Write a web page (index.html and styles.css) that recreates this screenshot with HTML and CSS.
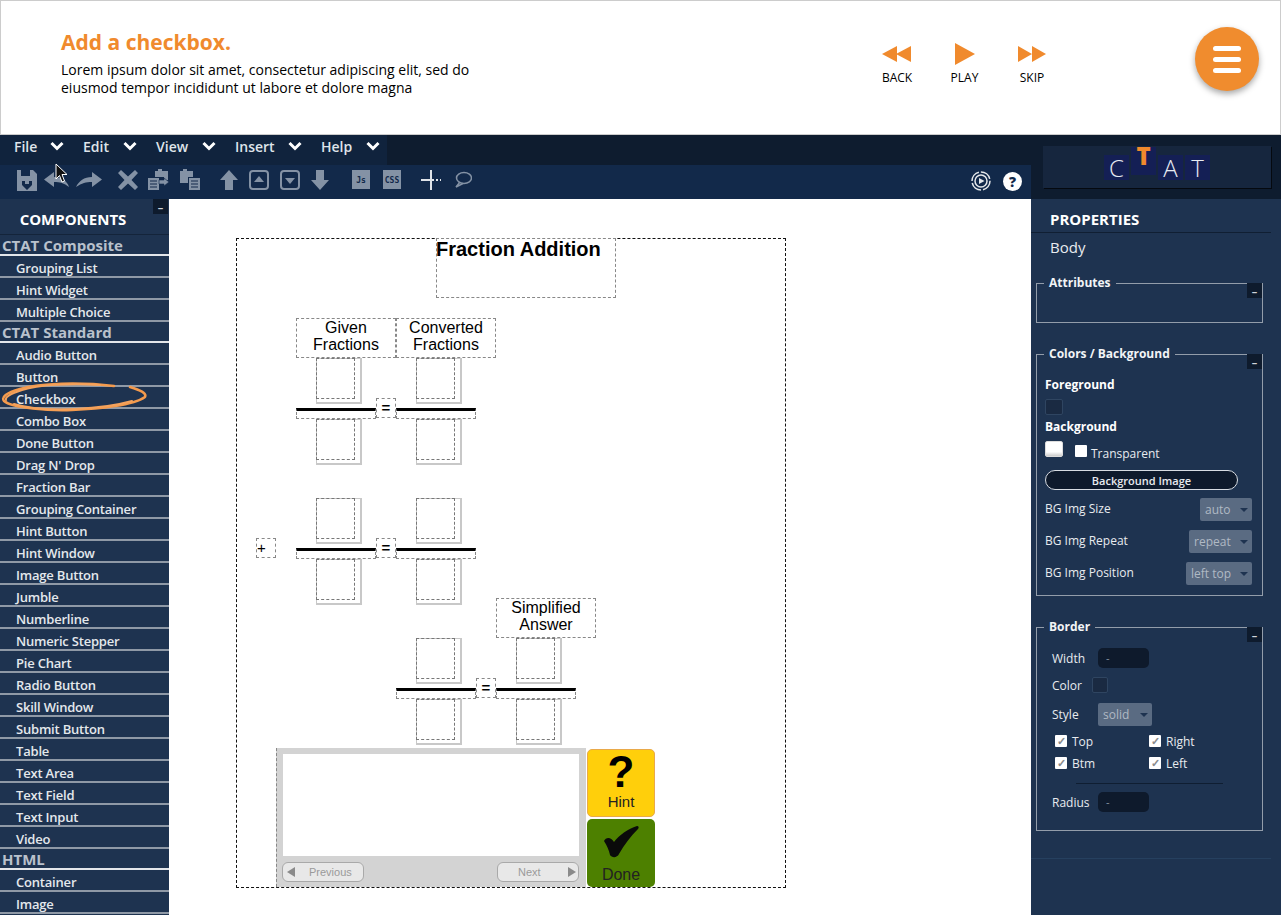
FILE: index.html
```html
<!DOCTYPE html>
<html lang="en">
<head>
    <meta charset="UTF-8">
    <meta name="viewport" content="width=device-width, initial-scale=1.0">
    <title>Add a checkbox</title>
    <link rel="stylesheet" href="styles.css">
</head>
<body>
    <header class="lesson">
        <div class="intro">
            <h1>Add a checkbox.</h1>
            <p>Lorem ipsum dolor sit amet, consectetur adipiscing elit, sed do<br>eiusmod tempor incididunt ut labore et dolore magna</p>
        </div>
        <div class="media">
            <div class="media-btn">
                <svg width="30" height="22" viewBox="0 0 30 22"><path d="M0 11 15 3V19ZM14 11 29 3V19Z" fill="#f08a2d"/></svg>
                <span>BACK</span>
            </div>
            <div class="media-btn">
                <svg width="30" height="22" viewBox="0 0 30 22"><path d="M5 0 25 11 5 22Z" fill="#f08a2d"/></svg>
                <span>PLAY</span>
            </div>
            <div class="media-btn">
                <svg width="30" height="22" viewBox="0 0 30 22"><path d="M1 3 15 11 1 19ZM15 3 29 11 15 19Z" fill="#f08a2d"/></svg>
                <span>SKIP</span>
            </div>
        </div>
        <button class="burger" type="button" aria-label="Menu"><i></i><i></i><i></i></button>
    </header>

    <div class="topbar">
        <div class="bars">
            <nav class="menu">
                <a class="m-file">File <svg class="chev" viewBox="0 0 14 10"><path d="M1.5 2 7 7.500 12.500 2" /></svg></a>
                <a class="m-edit">Edit <svg class="chev" viewBox="0 0 14 10"><path d="M1.5 2 7 7.500 12.500 2" /></svg></a>
                <a class="m-view">View <svg class="chev" viewBox="0 0 14 10"><path d="M1.5 2 7 7.500 12.500 2" /></svg></a>
                <a class="m-insert">Insert <svg class="chev" viewBox="0 0 14 10"><path d="M1.5 2 7 7.500 12.500 2" /></svg></a>
                <a class="m-help">Help <svg class="chev" viewBox="0 0 14 10"><path d="M1.5 2 7 7.500 12.500 2" /></svg></a>
            </nav>
            <div class="tools">
                <div class="tool-group g1">
                    <svg width="20" height="22" viewBox="0 0 20 22"><path d="M0 1H16L20 5V22H0ZM4 1V7H13V1ZM5 12H8V15H12V12H15V16L10 21 5 16Z" fill="#8492a5" fill-rule="evenodd"/></svg>
                    <svg width="25" height="16" viewBox="0 0 25 16"><path d="M10 0V5C18 5 23 9 25 15 20 11 16 10 10 10V15L0 7.500Z" fill="#8492a5"/></svg>
                    <svg width="26" height="16" viewBox="0 0 26 16"><path d="M16 0V5C8 5 3 9 0 15 6 11 10 10 16 10V15L26 7.500Z" fill="#8492a5"/></svg>
                </div>
                <div class="tool-group g2">
                    <svg width="20" height="20" viewBox="0 0 20 20"><path d="M3 0 10 6.500 17 0 20 3 13.500 10 20 17 17 20 10 13.500 3 20 0 17 6.500 10 0 3Z" fill="#8492a5"/></svg>
                    <svg width="21" height="21" viewBox="0 0 21 21"><path d="M7 2H10V0H14V2H20V11H16V8H7ZM0 9H11V21H0Z" fill="#8492a5"/><path d="M2 12H9M2 15H9M2 18H9" stroke="#12294a"/><path d="M11 11H16V9L21 13 16 17V15H11Z" fill="#8492a5" stroke="#12294a" stroke-width=".6"/></svg>
                    <svg width="21" height="21" viewBox="0 0 21 21"><path d="M1 2H4V0H8V2H14V8H9V14H1ZM10 9H21V21H10Z" fill="#8492a5"/><path d="M12 12H19M12 15H19M12 18H19" stroke="#12294a"/></svg>
                </div>
                <div class="tool-group g3">
                    <svg width="18" height="20" viewBox="0 0 18 20"><path d="M9 0 18 10H13V20H5V10H0Z" fill="#8492a5"/></svg>
                    <svg width="20" height="20" viewBox="0 0 20 20"><rect x="1" y="1" width="18" height="18" rx="3" fill="none" stroke="#8492a5" stroke-width="2"/><path d="M10 6 15 12H5Z" fill="#8492a5"/></svg>
                    <svg width="20" height="20" viewBox="0 0 20 20"><rect x="1" y="1" width="18" height="18" rx="3" fill="none" stroke="#8492a5" stroke-width="2"/><path d="M10 14 15 8H5Z" fill="#8492a5"/></svg>
                    <svg width="18" height="20" viewBox="0 0 18 20"><path d="M9 20 18 10H13V0H5V10H0Z" fill="#8492a5"/></svg>
                </div>
                <div class="tool-group g4">
                    <span class="code-tile">Js</span>
                    <span class="code-tile">CSS</span>
                </div>
                <div class="tool-group g5">
                    <svg width="20" height="20" viewBox="0 0 20 20"><path d="M10 0V20M0 10H20" stroke="#dfe3e8" stroke-width="2"/><path d="M13 10H20" stroke="#12294a" stroke-width="2" stroke-dasharray="2 2"/></svg>
                    <svg width="18" height="18" viewBox="0 0 18 18"><ellipse cx="10" cy="7" rx="7.500" ry="5.500" fill="none" stroke="#8492a5" stroke-width="1.500"/><path d="M6 11 2 16 9 12.500" fill="none" stroke="#8492a5" stroke-width="1.500"/></svg>
                </div>
                <div class="tool-end">
                    <svg width="20" height="20" viewBox="0 0 20 20"><circle cx="10" cy="10" r="9" fill="none" stroke="#e4e7ea" stroke-width="1.500" stroke-dasharray="12 2"/><circle cx="10" cy="10" r="6" fill="none" stroke="#e4e7ea" stroke-width="1.500"/><path d="M8 7 13.500 10 8 13Z" fill="#e4e7ea"/></svg>
                    <span class="help-dot">?</span>
                </div>
            </div>
        </div>
        <div class="logo">
            <span class="logo-cell">C</span>
            <span class="logo-cell logo-t">T</span>
            <span class="logo-cell">A</span>
            <span class="logo-cell">T</span>
        </div>
    </div>

    <main class="workspace">
        <aside class="components">
            <h2>COMPONENTS</h2>
            <span class="collapse">&ndash;</span>
            <h3>CTAT Composite</h3>
            <ul>
                <li>Grouping List</li>
                <li>Hint Widget</li>
                <li>Multiple Choice</li>
            </ul>
            <h3>CTAT Standard</h3>
            <ul>
                <li>Audio Button</li>
                <li>Button</li>
                <li>Checkbox</li>
                <li>Combo Box</li>
                <li>Done Button</li>
                <li>Drag N' Drop</li>
                <li>Fraction Bar</li>
                <li>Grouping Container</li>
                <li>Hint Button</li>
                <li>Hint Window</li>
                <li>Image Button</li>
                <li>Jumble</li>
                <li>Numberline</li>
                <li>Numeric Stepper</li>
                <li>Pie Chart</li>
                <li>Radio Button</li>
                <li>Skill Window</li>
                <li>Submit Button</li>
                <li>Table</li>
                <li>Text Area</li>
                <li>Text Field</li>
                <li>Text Input</li>
                <li>Video</li>
            </ul>
            <h3>HTML</h3>
            <ul>
                <li>Container</li>
                <li>Image</li>
            </ul>
            <svg class="scribble" width="150" height="34" viewBox="0 0 150 34">
                <path d="M114 5C80 1 40 2 20 8 6 12 1 16 4 20 12 27 50 30 72 29 100 28 134 24 145 16 147 12 140 9 130 6" fill="none" stroke="#f39a4d" stroke-width="2.500" stroke-linecap="round"/>
                <path d="M100 4C70 2 38 4 22 9 10 13 5 16 6 19M14 23C30 28 55 29 75 28 95 27 118 24 132 20" fill="none" stroke="#f4a25c" stroke-width="2" stroke-linecap="round"/>
            </svg>
        </aside>

        <section class="canvas">
            <div class="stage">
                <div class="cell title-cell">Fraction Addition</div>

                <div class="cell label-cell at-given">Given<br>Fractions</div>
                <div class="cell label-cell at-converted">Converted<br>Fractions</div>
                <div class="frac-row row-first">
                    <div class="fraction"><div class="frac-box"></div><div class="frac-bar"></div><div class="frac-box"></div></div>
                    <div class="cell eq">=</div>
                    <div class="fraction"><div class="frac-box"></div><div class="frac-bar"></div><div class="frac-box"></div></div>
                </div>

                <div class="cell eq plus">+</div>
                <div class="frac-row row-second">
                    <div class="fraction"><div class="frac-box"></div><div class="frac-bar"></div><div class="frac-box"></div></div>
                    <div class="cell eq">=</div>
                    <div class="fraction"><div class="frac-box"></div><div class="frac-bar"></div><div class="frac-box"></div></div>
                </div>

                <div class="cell label-cell at-simplified">Simplified<br>Answer</div>
                <div class="frac-row row-third">
                    <div class="fraction"><div class="frac-box"></div><div class="frac-bar"></div><div class="frac-box"></div></div>
                    <div class="cell eq">=</div>
                    <div class="fraction"><div class="frac-box"></div><div class="frac-bar"></div><div class="frac-box"></div></div>
                </div>

                <div class="tutor">
                    <div class="hints">
                        <div class="hint-text"></div>
                        <div class="hint-nav">
                            <button type="button" class="prev"><i class="tri-left"></i>Previous</button>
                            <button type="button" class="next">Next<i class="tri-right"></i></button>
                        </div>
                    </div>
                    <div class="tutor-btns">
                        <div class="big-btn hint-btn"><b>?</b><span>Hint</span></div>
                        <div class="big-btn done-btn">
                            <svg width="35" height="32" viewBox="0 0 35 32"><path d="M0 15C2 11 7 11 10 16 15 9 24 3 33 0 35 0 35 2 34 3 27 10 20 19 15 28 13 32 8 32 6 29 5 24 3 20 0 15Z" fill="#0a0a0a"/></svg>
                            <span>Done</span>
                        </div>
                    </div>
                </div>
            </div>
        </section>

        <aside class="properties">
            <h2>PROPERTIES</h2>
            <div class="target">Body</div>

            <fieldset class="attrs">
                <legend>Attributes</legend>
                <span class="collapse">&ndash;</span>
            </fieldset>

            <fieldset class="colors">
                <legend>Colors / Background</legend>
                <span class="collapse">&ndash;</span>
                <div class="strong-label">Foreground</div>
                <div class="swatch"></div>
                <div class="strong-label bg-label">Background</div>
                <div class="bg-row">
                    <div class="swatch swatch-white"></div>
                    <span class="box"></span>
                    <span>Transparent</span>
                </div>
                <button class="pill" type="button">Background Image</button>
                <div class="prop-row"><span>BG Img Size</span><span class="select sel-size">auto</span></div>
                <div class="prop-row"><span>BG Img Repeat</span><span class="select sel-repeat">repeat</span></div>
                <div class="prop-row"><span>BG Img Position</span><span class="select sel-position">left top</span></div>
            </fieldset>

            <fieldset class="border-set">
                <legend>Border</legend>
                <span class="collapse">&ndash;</span>
                <div class="border-row"><label>Width</label><span class="num">-</span></div>
                <div class="border-row color-row"><label>Color</label><div class="swatch swatch-sm"></div></div>
                <div class="border-row style-row"><label>Style</label><span class="select sel-style">solid</span></div>
                <div class="sides">
                    <span><i class="box check">&#10003;</i>Top</span>
                    <span><i class="box check">&#10003;</i>Right</span>
                    <span><i class="box check">&#10003;</i>Btm</span>
                    <span><i class="box check">&#10003;</i>Left</span>
                </div>
                <hr>
                <div class="border-row"><label>Radius</label><span class="num">-</span></div>
            </fieldset>
            <div class="panel-rule"></div>
        </aside>
    </main>

    <svg class="pointer" width="14" height="21" viewBox="0 0 14 21"><path d="M1 1V16L4.500 12.500 7 19 9.500 18 7 11.500H12Z" fill="#111" stroke="#fff"/></svg>
</body>
</html>
```

FILE: styles.css
```css
* {
    margin: 0;
    padding: 0;
    box-sizing: border-box;
}

body {
    width: 1281px;
    height: 915px;
    overflow: hidden;
    position: relative;
    background: #fff;
    font-family: 'Open Sans', sans-serif;
    color: #000;
}

/* lesson header */
.lesson {
    height: 135px;
    display: flex;
    align-items: flex-start;
    border: 1px solid #ccc;
    padding-left: 60px;
}

.intro {
    width: 803px;
    padding-top: 27px;
}

.intro h1 {
    font-size: 21px;
    line-height: 28px;
    font-weight: 700;
    color: #f08a2d;
    margin-bottom: 5px;
}

.intro p {
    font-size: 14px;
    line-height: 18px;
}

.media {
    display: flex;
    gap: 1.5px;
    padding-top: 42px;
}

.media-btn {
    width: 66px;
    display: flex;
    flex-direction: column;
    align-items: center;
    gap: 4px;
    font-size: 12px;
    font-weight: 500;
    line-height: 18px;
}

.burger {
    width: 64px;
    height: 64px;
    margin: 26px 0 0 130px;
    border: none;
    border-radius: 50%;
    background: #f08c2e;
    box-shadow: 0 3px 6px rgba(0, 0, 0, 0.35);
    display: flex;
    flex-direction: column;
    align-items: center;
    justify-content: center;
    gap: 6px;
}

.burger i {
    width: 28px;
    height: 5px;
    border-radius: 3px;
    background: #fff;
}

/* menu + toolbar */
.topbar {
    height: 64px;
    display: flex;
    background: #0e1c2f;
}

.bars {
    width: 1031px;
}

.menu {
    width: 387px;
    height: 30px;
    display: flex;
    padding-left: 14px;
    background: #10233d;
}

.menu a {
    display: flex;
    justify-content: space-between;
    padding-right: 19px;
    align-items: center;
    font-size: 14px;
    font-weight: 600;
    color: #dfe4ea;
    height: 26px;
    margin-top: -2px;
}

.m-file { width: 69px; }
.m-edit { width: 73px; }
.m-view { width: 79px; }
.m-insert { width: 86px; }
.menu .m-help { width: 66px; padding-right: 7px; }

.chev {
    width: 14px;
    height: 10px;
    margin-top: -1px;
    fill: none;
    stroke: #fff;
    stroke-width: 3;
}

.tools {
    height: 34px;
    display: flex;
    align-items: center;
    padding: 0 0 5px 17px;
    background: #12294a;
}

.tool-group {
    display: flex;
    align-items: center;
}

.g1 { gap: 7px; }
.g2 { gap: 10px; margin-left: 16px; }
.g3 { gap: 11px; margin-left: 20px; }
.g4 { gap: 13px; margin-left: 23px; }
.g5 { gap: 13px; margin-left: 20px; }

.code-tile {
    width: 18px;
    height: 19px;
    background: #8492a5;
    color: #12294a;
    font-family: 'DejaVu Sans Mono', monospace;
    font-size: 8px;
    font-weight: 700;
    line-height: 21px;
    text-align: center;
}

.tool-end {
    margin-left: auto;
    margin-right: 9px;
    display: flex;
    align-items: center;
    gap: 12px;
    padding-top: 3px;
}

.help-dot {
    width: 19px;
    height: 19px;
    border-radius: 50%;
    background: #fff;
    color: #12294a;
    font-size: 14px;
    font-weight: 800;
    line-height: 19px;
    text-align: center;
}

.logo {
    width: 228px;
    height: 42px;
    margin: 11px 0 0 12px;
    display: flex;
    justify-content: center;
    align-items: flex-end;
    gap: 2px;
    padding-bottom: 8px;
    background: #16263e;
    box-shadow: 1px 1px 0 #05090f;
}

.logo-cell {
    width: 25px;
    height: 25px;
    background: #141f55;
    color: #e8ebf2;
    font-size: 24px;
    font-weight: 300;
    line-height: 26px;
    text-align: center;
}

.logo-t {
    height: 28px;
    margin-bottom: 5px;
    color: #f08a2d;
    font-weight: 800;
    line-height: 17px;
}

/* three panes */
.workspace {
    height: 716px;
    display: flex;
}

.components {
    width: 169px;
    position: relative;
    background: #1e3350;
    color: #e4e8ec;
}

.components h2 {
    height: 36px;
    padding: 10px 23px 0 0;
    font-size: 15px;
    line-height: 20px;
    font-weight: 700;
    color: #fff;
    text-align: center;
    border-bottom: 1px solid #14243a;
}

.components h3 {
    height: 21px;
    padding-left: 2px;
    font-size: 15px;
    line-height: 20px;
    font-weight: 700;
    color: #b9c1cc;
    border-bottom: 2px solid #e3e6ea;
}

.components ul {
    list-style: none;
}

.components li {
    height: 22px;
    padding: 2px 0 0 16px;
    font-size: 13px;
    font-weight: 600;
    letter-spacing: -0.2px;
    line-height: 20px;
    border-bottom: 2px solid #8f99a6;
}

.collapse {
    position: absolute;
    width: 15px;
    height: 15px;
    background: #0e1b2d;
    color: #cfd4da;
    font-size: 11px;
    font-weight: 700;
    line-height: 16px;
    text-align: center;
}

.components .collapse {
    top: 0;
    right: 1px;
}

.scribble {
    position: absolute;
    top: 182px;
    left: 0;
}

.pointer {
    position: absolute;
    top: 163px;
    left: 55px;
}

/* canvas */
.canvas {
    width: 862px;
    background: #fff;
    padding: 39px 0 0 67px;
}

.stage {
    width: 550px;
    height: 650px;
    position: relative;
    border: 1px dashed #111;
    font-family: 'Liberation Sans', sans-serif;
}

.cell {
    border: 1px dashed #888;
    text-align: center;
    background: #fff;
}

.title-cell {
    position: absolute;
    left: 199px;
    top: -1px;
    width: 180px;
    height: 60px;
    font-size: 20px;
    font-weight: 700;
    line-height: 20px;
    text-align: left;
    text-indent: -1px;
    white-space: nowrap;
}

.label-cell {
    position: absolute;
    width: 100px;
    height: 40px;
    font-size: 16px;
    line-height: 17px;
}

.at-given { left: 59px; top: 79px; }
.at-converted { left: 159px; top: 79px; }
.at-simplified { left: 259px; top: 359px; }

.frac-row {
    position: absolute;
    display: flex;
}

.row-first { left: 59px; top: 119px; }
.row-second { left: 59px; top: 259px; }
.row-third { left: 159px; top: 399px; }

.fraction {
    width: 80px;
    display: flex;
    flex-direction: column;
    align-items: flex-start;
}

.frac-box {
    width: 46px;
    height: 46px;
    margin-left: 20px;
    padding: 0 5px 5px 0;
    border: solid #c8c8c8;
    border-width: 1px 2px 2px 1px;
}

.frac-box::after {
    content: "";
    display: block;
    height: calc(100% + 1px);
    margin: -1px 0 0 -1px;
    border: 1px dashed #777;
}

.frac-bar {
    width: 80px;
    height: 11px;
    margin-top: 4px;
    border: 1px dashed #888;
    border-top: 3px solid #000;
}

.eq {
    width: 20px;
    height: 20px;
    margin-top: 40px;
    font-size: 15px;
    font-weight: 700;
    line-height: 18px;
    position: relative;
    z-index: 1;
}

.plus {
    position: absolute;
    left: 19px;
    top: 299px;
    margin: 0;
    padding-right: 10px;
    color: #000;
    font-size: 15px;
    font-weight: 400;
}

.tutor {
    position: absolute;
    left: 39px;
    top: 509px;
    display: flex;
    gap: 1px;
}

.hints {
    width: 310px;
    height: 139px;
    padding: 6px 7px 0 5px;
    background: #d3d3d3;
    border-left: 1px dashed #888;
}

.hint-text {
    height: 102px;
    margin-left: 1px;
    background: #fff;
}

.hint-nav {
    display: flex;
    justify-content: space-between;
    margin-top: 6px;
}

.hint-nav button {
    width: 82px;
    height: 20px;
    display: flex;
    align-items: center;
    background: #e8e8e8;
    border: 1px solid #a9a9a9;
    border-radius: 6px;
    color: #9a9a9a;
    font-family: 'Liberation Sans', sans-serif;
    font-size: 11px;
}

.hint-nav .prev {
    padding-left: 4px;
}

.hint-nav .next {
    padding: 0 2px 0 20px;
}

.tri-left,
.tri-right {
    width: 0;
    height: 0;
    border-top: 5px solid transparent;
    border-bottom: 5px solid transparent;
}

.tri-left {
    border-right: 8px solid #8a8a8a;
    margin-right: 14px;
}

.tri-right {
    border-left: 8px solid #8a8a8a;
    margin-left: auto;
}

.tutor-btns {
    display: flex;
    flex-direction: column;
    gap: 2px;
    padding-top: 1px;
}

.big-btn {
    width: 68px;
    height: 68px;
    border-radius: 5px;
    display: flex;
    flex-direction: column;
    align-items: center;
    color: #222;
    font-size: 15px;
}

.hint-btn {
    background: #ffcf0b;
    border: 1px solid #e9a94a;
}

.hint-btn b {
    font-size: 44px;
    line-height: 44px;
    color: #000;
}

.hint-btn span {
    line-height: 16px;
}

.done-btn {
    background: #4d8000;
    padding-top: 7px;
    font-size: 16px;
}

.done-btn span {
    margin-top: 8px;
    line-height: 18px;
}

/* properties */
.properties {
    width: 250px;
    position: relative;
    background: #1e3350;
    color: #e8ebef;
    padding-left: 5px;
    font-size: 12px;
}

.properties h2 {
    width: 240px;
    height: 34px;
    margin-left: -5px;
    padding: 10px 0 0 19px;
    font-size: 15px;
    line-height: 20px;
    font-weight: 700;
    color: #fff;
    border-bottom: 1px solid #101f33;
}

.target {
    padding-left: 14px;
    margin: 4px 0 18px;
    font-size: 15px;
    line-height: 20px;
}

.properties fieldset {
    width: 227px;
    position: relative;
    border: 1px solid #939daa;
    margin-bottom: 23px;
}

.properties legend {
    margin-left: 7px;
    padding: 0 5px;
    font-size: 12px;
    line-height: 16px;
    font-weight: 700;
    color: #f2f4f6;
}

.properties .colors legend {
    margin-left: -1px;
}

.properties .border-set legend {
    margin-left: -8px;
}

.properties .collapse {
    right: 0;
    top: -8px;
}

.attrs {
    height: 48px;
}

.colors {
    height: 250px;
    padding: 15px 10px 0 8px;
}

.strong-label {
    font-size: 12px;
    font-weight: 700;
    line-height: 16px;
    color: #fff;
}

.bg-label {
    margin-top: 4px;
}

.swatch {
    width: 18px;
    height: 16px;
    margin-top: 6px;
    border: 1px solid #2f4561;
    border-radius: 2px;
    background: #1a2a42;
}

.swatch-white {
    margin-top: 0;
    background: linear-gradient(#fff 70%, #ccc);
    border-color: #ddd;
}

.bg-row {
    margin-top: 6px;
    display: flex;
    height: 16px;
    align-items: flex-start;
}

.box {
    width: 12px;
    height: 12px;
    display: block;
    background: #fff;
    border-radius: 1px;
}

.bg-row .box {
    margin: 4px 4px 0 12px;
}

.bg-row span:last-child {
    margin-top: 5px;
    line-height: 16px;
}

.pill {
    display: block;
    width: 193px;
    height: 20px;
    margin-top: 13px;
    background: #0e1a2c;
    border: 1px solid #d7dce2;
    border-radius: 10px;
    color: #e8ebef;
    font-family: 'Open Sans', sans-serif;
    font-size: 11px;
    font-weight: 600;
}

.prop-row {
    display: flex;
    justify-content: space-between;
    align-items: flex-start;
    height: 23px;
    margin-top: 9px;
    line-height: 22px;
}

.pill + .prop-row {
    margin-top: 8px;
}

.select {
    height: 23px;
    position: relative;
    display: block;
    padding-left: 5px;
    border-radius: 2px;
    background: #5a6b82;
    color: #b0b9c4;
    font-size: 12px;
    line-height: 23px;
}

.sel-size { width: 52px; }
.sel-repeat { width: 63px; }
.sel-position { width: 66px; }
.sel-style { width: 54px; }

.select::after {
    content: "";
    position: absolute;
    right: 4px;
    top: 10px;
    border: 4px solid transparent;
    border-top: 4px solid #1e3350;
}

.border-set {
    height: 212px;
    padding: 13px 0 0 15px;
}

.border-row {
    display: flex;
    align-items: center;
    height: 20px;
}

.border-row label {
    width: 46px;
}

.num {
    width: 51px;
    height: 20px;
    padding-left: 8px;
    border-radius: 5px;
    background: #0e1a2c;
    color: #8a94a1;
    font-size: 11px;
    line-height: 20px;
}

.color-row {
    margin-top: 8px;
    height: 18px;
}

.color-row label {
    width: 40px;
}

.swatch-sm {
    width: 16px;
    margin-top: 0;
}

.style-row {
    margin-top: 9px;
    height: 23px;
}

.sides {
    display: grid;
    grid-template-columns: 94px 94px;
    row-gap: 6px;
    margin-top: 7px;
    padding-left: 3px;
}

.sides span {
    display: flex;
    align-items: center;
    gap: 5px;
    height: 16px;
}

.check {
    color: #8c8c8c;
    font-style: normal;
    font-size: 11px;
    font-weight: 700;
    line-height: 12px;
    text-align: center;
}

.properties hr {
    width: 147px;
    margin: 12px 0 8px 24px;
    border: none;
    border-top: 1px solid #0f1e32;
}

.panel-rule {
    position: absolute;
    left: 0;
    top: 659px;
    width: 240px;
    border-top: 1px solid #26405f;
}
```
